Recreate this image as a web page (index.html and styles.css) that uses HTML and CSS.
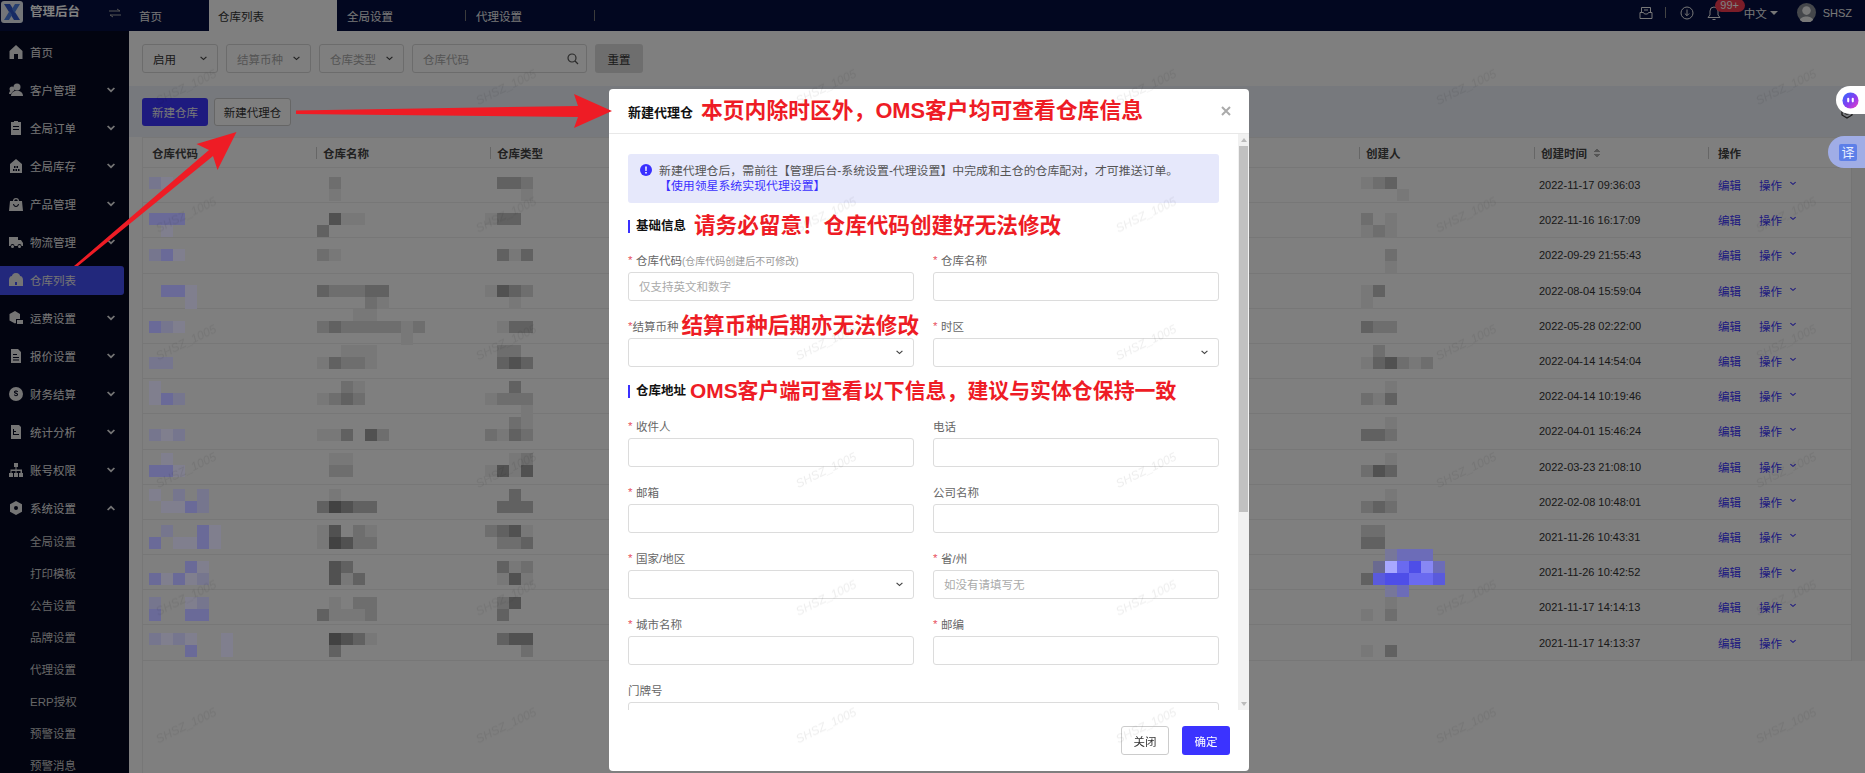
FILE: index.html
```html
<!DOCTYPE html>
<html lang="zh-CN">

<head>
    <meta charset="UTF-8">
    <title>仓库列表</title>
    <link rel="stylesheet" href="styles.css">
</head>

<body>

    <header class="topbar">
        <div class="brand">
            <svg class="logo" viewBox="0 0 22 22"><rect width="22" height="22" rx="3" fill="#e6ebf2"/><path d="M3 3h6l10 16h-6z" fill="#2f56c8"/><path d="M19 3h-5l-3 5 2.500 4zM3 19h5l3-5-2.500-4z" fill="#4d7fe0"/></svg>
            <span class="brand-name">管理后台</span>
            <svg class="toggle" viewBox="0 0 12 10" fill="none" stroke="currentColor"><path d="M0 3h11L8 1M12 7H1l3 2"/></svg>
        </div>
        <nav class="tabs">
            <a class="tab tab-first">首页</a>
            <a class="tab tab-active">仓库列表</a>
            <a class="tab">全局设置</a>
            <i class="tab-line"></i>
            <a class="tab">代理设置</a>
            <i class="tab-line"></i>
        </nav>
        <div class="top-tools">
            <svg class="tool-inbox" viewBox="0 0 14 14" fill="none" stroke="currentColor"><path d="M2.500 6V1.500h9V6M1 6.500h3.500l1 1.500h3l1-1.500H13v6H1zM5 4h4"/></svg>
            <i class="tool-line"></i>
            <svg class="tool-down" viewBox="0 0 14 14" fill="none" stroke="currentColor"><circle cx="7" cy="7" r="6"/><path d="M7 3.500v6M4.800 7.500 7 9.700l2.200-2.200"/></svg>
            <span class="bell">
                <svg viewBox="0 0 14 16" fill="none" stroke="currentColor"><path d="M7 2a4 4 0 0 0-4 4v4l-2 2.500h12L11 10V6a4 4 0 0 0-4-4zM5.500 14.500h3"/></svg>
                <b class="badge">99+</b>
            </span>
            <span class="lang">中文</span>
            <i class="caret"></i>
            <svg class="avatar" viewBox="0 0 20 20"><circle cx="10" cy="10" r="10" fill="#8a8f96"/><circle cx="10" cy="8" r="4.500" fill="#f0f0f0"/><path d="M3 18c1-5 13-5 14 0a10 10 0 0 1-14 0z" fill="#f0f0f0"/></svg>
            <span class="user">SHSZ</span>
        </div>
    </header>

    <div class="shell">
        <aside class="sidebar">
            <a class="nav-item">
                <svg class="nav-icon" viewBox="0 0 14 14"><path d="M7 0 .5 6v8h4.500V9h4v5h4.500V6z"/></svg>
                <span>首页</span>
            </a>
            <a class="nav-item">
                <svg class="nav-icon" viewBox="0 0 14 14"><circle cx="8" cy="4" r="3.500"/><path d="M2 13c0-7 12-7 12 0z"/><circle cx="3" cy="6" r="2.500"/><path d="M0 11c0-3 2-4 4-3l-2 3z"/></svg>
                <span>客户管理</span>
                <svg class="nav-arrow" viewBox="0 0 8 6"><path d="M0 1.500 1.200.5 4 3 6.800.5 8 1.500 4 5.500z"/></svg>
            </a>
            <a class="nav-item">
                <svg class="nav-icon" viewBox="0 0 14 14"><path d="M2 1h3V0h4v1h3v13H2zM4 5v1h6V5zm0 3v1h6V8z"/></svg>
                <span>全局订单</span>
                <svg class="nav-arrow" viewBox="0 0 8 6"><path d="M0 1.500 1.200.5 4 3 6.800.5 8 1.500 4 5.500z"/></svg>
            </a>
            <a class="nav-item">
                <svg class="nav-icon" viewBox="0 0 14 14"><path d="M7 0 1 5v9h12V5zM5 7h1.500v2H5zm2.500 0H9v2H7.500zM4 10h1.500v2H4zm2.500 0H8v2H6.500zm2.500 0h1.500v2H9z"/></svg>
                <span>全局库存</span>
                <svg class="nav-arrow" viewBox="0 0 8 6"><path d="M0 1.500 1.200.5 4 3 6.800.5 8 1.500 4 5.500z"/></svg>
            </a>
            <a class="nav-item">
                <svg class="nav-icon" viewBox="0 0 14 14"><path d="M4 4a3 3 0 0 1 6 0h3l1 10H0l1-10zm1.200 0h3.600a1.800 1.800 0 0 0-3.600 0zM4 7c.5 4 5.500 4 6 0H9c-.5 2.500-3.500 2.500-4 0z"/></svg>
                <span>产品管理</span>
                <svg class="nav-arrow" viewBox="0 0 8 6"><path d="M0 1.500 1.200.5 4 3 6.800.5 8 1.500 4 5.500z"/></svg>
            </a>
            <a class="nav-item">
                <svg class="nav-icon" viewBox="0 0 14 14"><path d="M0 2h9v3h3l2 3v3h-1.500a2 2 0 0 0-4 0h-3a2 2 0 0 0-4 0H0z"/><circle cx="3.500" cy="11.500" r="1.500"/><circle cx="10.500" cy="11.500" r="1.500"/></svg>
                <span>物流管理</span>
                <svg class="nav-arrow" viewBox="0 0 8 6"><path d="M0 1.500 1.200.5 4 3 6.800.5 8 1.500 4 5.500z"/></svg>
            </a>
            <a class="nav-item nav-active">
                <svg class="nav-icon" viewBox="0 0 14 14"><path d="M7 0C4 0 3 2 3 3 1 3 0 5 0 7v6h14V7c0-2-1-4-3-4 0-1-1-3-4-3zM6 9h2v3H6z"/></svg>
                <span>仓库列表</span>
            </a>
            <a class="nav-item">
                <svg class="nav-icon" viewBox="0 0 14 14"><path d="M6 0 .5 3v6.500L6 12.500l1-.6V8h4V3zM8 9h6v4H8z"/></svg>
                <span>运费设置</span>
                <svg class="nav-arrow" viewBox="0 0 8 6"><path d="M0 1.500 1.200.5 4 3 6.800.5 8 1.500 4 5.500z"/></svg>
            </a>
            <a class="nav-item">
                <svg class="nav-icon" viewBox="0 0 14 14"><path d="M2 0h7l3 3v11H2zm2 5v1h4V5zm0 3v1h6V8zm0 2.500v1h6v-1z"/></svg>
                <span>报价设置</span>
                <svg class="nav-arrow" viewBox="0 0 8 6"><path d="M0 1.500 1.200.5 4 3 6.800.5 8 1.500 4 5.500z"/></svg>
            </a>
            <a class="nav-item">
                <svg class="nav-icon" viewBox="0 0 14 14"><path fill-rule="evenodd" d="M7 0a7 7 0 1 0 0 14A7 7 0 0 0 7 0zM5 5c0-2 4-2 4 0H8c0-.8-2-.8-2 0s3 .5 3 2.500c0 2.200-4 2.200-4 0h1c0 1 2 1 2 0S5 7 5 5z"/></svg>
                <span>财务结算</span>
                <svg class="nav-arrow" viewBox="0 0 8 6"><path d="M0 1.500 1.200.5 4 3 6.800.5 8 1.500 4 5.500z"/></svg>
            </a>
            <a class="nav-item">
                <svg class="nav-icon" viewBox="0 0 14 14"><path fill-rule="evenodd" d="M2 0h8l2 2v12H2zm2 4v6h6V9H5V7h2V6H5V4z"/></svg>
                <span>统计分析</span>
                <svg class="nav-arrow" viewBox="0 0 8 6"><path d="M0 1.500 1.200.5 4 3 6.800.5 8 1.500 4 5.500z"/></svg>
            </a>
            <a class="nav-item">
                <svg class="nav-icon" viewBox="0 0 14 14"><path d="M5 0h4v4H7.500v2.500H13V10h1v4h-4v-4h1.500V8H7.500v2H9v4H5v-4h1.500V8h-4v2H4v4H0v-4h1.500V6.500h5V4H5z"/></svg>
                <span>账号权限</span>
                <svg class="nav-arrow" viewBox="0 0 8 6"><path d="M0 1.500 1.200.5 4 3 6.800.5 8 1.500 4 5.500z"/></svg>
            </a>
            <a class="nav-item">
                <svg class="nav-icon" viewBox="0 0 14 14"><path fill-rule="evenodd" d="M7 0l6 3.300v7.400L7 14l-6-3.300V3.300zm0 5a2 2 0 1 0 0 4 2 2 0 0 0 0-4z"/></svg>
                <span>系统设置</span>
                <svg class="nav-arrow" viewBox="0 0 8 6"><path d="M0 4.500 1.200 5.500 4 3l2.800 2.500L8 4.500 4 .5z"/></svg>
            </a>
            <div class="subnav">
                <a class="sub-item">全局设置</a>
                <a class="sub-item">打印模板</a>
                <a class="sub-item">公告设置</a>
                <a class="sub-item">品牌设置</a>
                <a class="sub-item">代理设置</a>
                <a class="sub-item">ERP授权</a>
                <a class="sub-item">预警设置</a>
                <a class="sub-item">预警消息</a>
            </div>
        </aside>

        <main class="main">
            <div class="filters">
                <div class="select filter-status"><span class="value">启用</span><svg class="chev" viewBox="0 0 8 6"><path d="M0 1.500 1 .5 4 3.300 7 .5l1 1-4 3.500z"/></svg></div>
                <div class="select filter-currency"><span class="hint">结算币种</span><svg class="chev" viewBox="0 0 8 6"><path d="M0 1.500 1 .5 4 3.300 7 .5l1 1-4 3.500z"/></svg></div>
                <div class="select filter-type"><span class="hint">仓库类型</span><svg class="chev" viewBox="0 0 8 6"><path d="M0 1.500 1 .5 4 3.300 7 .5l1 1-4 3.500z"/></svg></div>
                <div class="select filter-code"><span class="hint">仓库代码</span><svg class="search" viewBox="0 0 12 12" fill="none" stroke="currentColor" stroke-width="1.200"><circle cx="5" cy="5" r="4"/><path d="M8 8l3 3"/></svg></div>
                <button class="btn-reset">重置</button>
            </div>

            <div class="toolbar">
                <button class="btn btn-primary">新建仓库</button>
                <button class="btn btn-plain">新建代理仓</button>
                <svg class="gear" viewBox="0 0 14 14" fill="none" stroke="currentColor" stroke-width="1.300"><path d="M7 1l5 3v6l-5 3-5-3V4z"/><circle cx="7" cy="7" r="2"/></svg>
            </div>

            <div class="table">
                <div class="thead">
                    <div class="th th-first"><span>仓库代码</span></div>
                    <div class="th"><span>仓库名称</span></div>
                    <div class="th"><span>仓库类型</span></div>
                    <div class="th"><span>创建人</span></div>
                    <div class="th"><span>创建时间<i class="sort"></i></span></div>
                    <div class="th th-ops"><span>操作</span></div>
                </div>
                <div class="tbody-wrap">
                    <div class="tbody">
                        <div class="tr"><div class="td-date">2022-11-17 09:36:03</div><div class="td-ops"><a>编辑</a><a>操作</a><svg class="op-chev" viewBox="0 0 8 6"><path d="M0 1.500 1 .5 4 3.300 7 .5l1 1-4 3.500z"/></svg></div></div>
                        <div class="tr"><div class="td-date">2022-11-16 16:17:09</div><div class="td-ops"><a>编辑</a><a>操作</a><svg class="op-chev" viewBox="0 0 8 6"><path d="M0 1.500 1 .5 4 3.300 7 .5l1 1-4 3.500z"/></svg></div></div>
                        <div class="tr"><div class="td-date">2022-09-29 21:55:43</div><div class="td-ops"><a>编辑</a><a>操作</a><svg class="op-chev" viewBox="0 0 8 6"><path d="M0 1.500 1 .5 4 3.300 7 .5l1 1-4 3.500z"/></svg></div></div>
                        <div class="tr"><div class="td-date">2022-08-04 15:59:04</div><div class="td-ops"><a>编辑</a><a>操作</a><svg class="op-chev" viewBox="0 0 8 6"><path d="M0 1.500 1 .5 4 3.300 7 .5l1 1-4 3.500z"/></svg></div></div>
                        <div class="tr"><div class="td-date">2022-05-28 02:22:00</div><div class="td-ops"><a>编辑</a><a>操作</a><svg class="op-chev" viewBox="0 0 8 6"><path d="M0 1.500 1 .5 4 3.300 7 .5l1 1-4 3.500z"/></svg></div></div>
                        <div class="tr"><div class="td-date">2022-04-14 14:54:04</div><div class="td-ops"><a>编辑</a><a>操作</a><svg class="op-chev" viewBox="0 0 8 6"><path d="M0 1.500 1 .5 4 3.300 7 .5l1 1-4 3.500z"/></svg></div></div>
                        <div class="tr"><div class="td-date">2022-04-14 10:19:46</div><div class="td-ops"><a>编辑</a><a>操作</a><svg class="op-chev" viewBox="0 0 8 6"><path d="M0 1.500 1 .5 4 3.300 7 .5l1 1-4 3.500z"/></svg></div></div>
                        <div class="tr"><div class="td-date">2022-04-01 15:46:24</div><div class="td-ops"><a>编辑</a><a>操作</a><svg class="op-chev" viewBox="0 0 8 6"><path d="M0 1.500 1 .5 4 3.300 7 .5l1 1-4 3.500z"/></svg></div></div>
                        <div class="tr"><div class="td-date">2022-03-23 21:08:10</div><div class="td-ops"><a>编辑</a><a>操作</a><svg class="op-chev" viewBox="0 0 8 6"><path d="M0 1.500 1 .5 4 3.300 7 .5l1 1-4 3.500z"/></svg></div></div>
                        <div class="tr"><div class="td-date">2022-02-08 10:48:01</div><div class="td-ops"><a>编辑</a><a>操作</a><svg class="op-chev" viewBox="0 0 8 6"><path d="M0 1.500 1 .5 4 3.300 7 .5l1 1-4 3.500z"/></svg></div></div>
                        <div class="tr"><div class="td-date">2021-11-26 10:43:31</div><div class="td-ops"><a>编辑</a><a>操作</a><svg class="op-chev" viewBox="0 0 8 6"><path d="M0 1.500 1 .5 4 3.300 7 .5l1 1-4 3.500z"/></svg></div></div>
                        <div class="tr"><div class="td-date">2021-11-26 10:42:52</div><div class="td-ops"><a>编辑</a><a>操作</a><svg class="op-chev" viewBox="0 0 8 6"><path d="M0 1.500 1 .5 4 3.300 7 .5l1 1-4 3.500z"/></svg></div></div>
                        <div class="tr"><div class="td-date">2021-11-17 14:14:13</div><div class="td-ops"><a>编辑</a><a>操作</a><svg class="op-chev" viewBox="0 0 8 6"><path d="M0 1.500 1 .5 4 3.300 7 .5l1 1-4 3.500z"/></svg></div></div>
                        <div class="tr"><div class="td-date">2021-11-17 14:13:37</div><div class="td-ops"><a>编辑</a><a>操作</a><svg class="op-chev" viewBox="0 0 8 6"><path d="M0 1.500 1 .5 4 3.300 7 .5l1 1-4 3.500z"/></svg></div></div>
                    </div>
                    <div class="gutter"></div>
                </div>
            </div>
        </main>
    </div>

    <!-- dim layer, the pixelated table data sits on top of it -->
    <div class="mask">
        <svg class="mosaic" viewBox="0 0 1865 773">
            <g transform="translate(149 177) scale(12)" shape-rendering="crispEdges">
                <path class="g78" d="M101 0h1v1h-1zM15 1h1v1h-1zM31 1h1v1h-1zM104 1h1v1h-1zM16 3h2v1h-2zM28 3h1v1h-1zM103 3h1v1h-1zM101 4h1v1h-1zM103 4h1v1h-1zM15 6h1v1h-1zM30 6h1v1h-1zM103 7h1v1h-1zM28 9h1v1h-1zM101 9h1v1h-1zM19 10h1v1h-1zM30 10h1v1h-1zM101 10h1v1h-1zM17 11h2v1h-2zM21 12h1v1h-1zM29 12h1v1h-1zM21 13h1v1h-1zM16 14h3v1h-3zM14 15h1v1h-1zM18 15h1v1h-1zM101 15h1v1h-1zM105 15h1v1h-1zM17 17h1v1h-1zM103 17h1v1h-1zM14 18h1v1h-1zM28 18h1v1h-1zM102 18h1v1h-1zM31 19h1v2h-1zM103 20h1v1h-1zM14 21h2v1h-2zM29 21h1v1h-1zM15 23h2v1h-2zM30 23h1v1h-1zM103 23h1v1h-1zM28 24h1v1h-1zM30 24h1v1h-1zM15 26h1v1h-1zM103 26h1v1h-1zM14 29h1v2h-1zM18 29h1v1h-1zM31 29h1v1h-1zM30 32h1v1h-1zM16 33h1v1h-1zM29 33h1v1h-1zM31 33h1v1h-1zM15 35h1v2h-1zM103 35h1v1h-1zM16 36h2v1h-2zM101 36h1v1h-1zM18 38h1v1h-1zM101 39h1v1h-1z"/>
                <path class="g70" d="M15 0h1v1h-1zM31 0h1v1h-1zM102 0h1v1h-1zM101 3h1v1h-1zM102 4h1v1h-1zM14 6h1v1h-1zM103 6h1v1h-1zM15 9h3v1h-3zM31 9h1v1h-1zM18 10h1v1h-1zM14 12h1v1h-1zM16 12h5v1h-5zM22 12h1v1h-1zM102 12h2v1h-2zM29 14h2v1h-2zM102 14h1v1h-1zM16 15h2v1h-2zM104 15h1v1h-1zM106 15h1v1h-1zM16 17h1v1h-1zM15 18h1v1h-1zM17 18h1v1h-1zM29 18h3v1h-3zM101 18h1v1h-1zM30 20h1v1h-1zM19 21h1v1h-1zM28 21h1v1h-1zM31 21h1v1h-1zM103 21h1v1h-1zM31 23h1v1h-1zM15 24h2v1h-2zM101 24h1v1h-1zM101 27h1v1h-1zM103 27h1v1h-1zM17 29h1v1h-1zM28 29h1v1h-1zM101 29h2v1h-2zM17 30h2v1h-2zM29 30h2v1h-2zM31 32h1v1h-1zM17 35h2v1h-2zM29 35h1v1h-1zM18 36h1v1h-1zM103 36h1v1h-1zM31 39h1v1h-1z"/>
                <path class="g60" d="M29 0h2v1h-2zM103 0h1v1h-1zM14 4h1v1h-1zM29 3h2v1h-2zM29 6h1v1h-1zM31 6h1v1h-1zM14 9h1v1h-1zM18 9h2v1h-2zM30 9h1v1h-1zM102 9h1v1h-1zM15 12h1v1h-1zM30 12h2v1h-2zM101 12h1v1h-1zM15 15h1v1h-1zM29 15h1v1h-1zM31 15h1v1h-1zM102 15h1v1h-1zM30 17h1v1h-1zM16 18h1v1h-1zM103 18h1v1h-1zM16 21h1v1h-1zM30 21h1v1h-1zM101 21h2v1h-2zM103 24h1v1h-1zM30 26h1v1h-1zM14 27h1v1h-1zM17 27h2v1h-2zM29 27h3v1h-3zM102 27h1v1h-1zM29 29h1v1h-1zM31 30h1v1h-1zM101 30h2v1h-2zM16 32h1v1h-1zM29 32h1v1h-1zM17 33h1v1h-1zM14 36h1v1h-1zM29 36h1v1h-1zM17 38h1v1h-1zM29 38h1v1h-1zM15 39h1v1h-1zM103 39h1v1h-1z"/>
                <path class="g50" d="M15 3h1v1h-1zM29 9h1v1h-1zM30 15h1v1h-1zM103 15h1v1h-1zM18 21h1v1h-1zM29 24h1v1h-1zM31 24h1v1h-1zM102 24h1v1h-1zM16 27h1v1h-1zM15 29h1v1h-1zM30 29h1v1h-1zM16 30h1v1h-1zM15 32h1v2h-1zM30 33h1v1h-1zM30 35h1v1h-1zM16 38h1v1h-1zM30 38h2v1h-2z"/>
                <path class="g40" d="M15 27h1v1h-1zM15 30h1v1h-1zM15 38h1v1h-1z"/>
                <path class="p1" d="M1 0h1v1h-1zM1 4h1v1h-1zM2 6h1v1h-1zM3 9h1v2h-1zM2 12h1v1h-1zM0 17h1v2h-1zM1 21h1v1h-1zM1 23h1v1h-1zM2 24h1v1h-1zM0 26h1v1h-1zM1 27h2v1h-2zM5 29h1v2h-1zM2 30h2v1h-2zM4 32h1v1h-1zM1 33h1v1h-1zM3 33h1v1h-1zM3 35h1v1h-1zM1 38h1v1h-1zM3 38h1v1h-1zM6 38h1v2h-1z"/>
                <path class="p2" d="M0 0h1v1h-1zM0 6h1v1h-1zM1 12h1v1h-1zM0 15h2v1h-2zM2 18h1v1h-1zM0 21h1v1h-1zM2 21h1v1h-1zM2 26h1v1h-1zM4 26h1v2h-1zM1 29h1v1h-1zM4 33h1v1h-1zM0 35h1v1h-1zM4 35h1v1h-1zM0 38h1v1h-1zM2 38h1v1h-1z"/>
                <path class="p3" d="M0 3h3v1h-3zM1 6h1v1h-1zM1 9h2v1h-2zM0 12h1v1h-1zM1 18h1v1h-1zM0 24h2v1h-2zM3 27h1v1h-1zM4 29h1v2h-1zM0 30h1v1h-1zM3 32h1v1h-1zM0 33h1v1h-1zM2 33h1v1h-1zM0 36h1v1h-1zM3 36h2v1h-2zM3 39h1v1h-1z"/>
                <path fill="#77779a" d="M103 31h1v1h-1zM103 34h1v1h-1z"/>
                <path fill="#6c6cb8" d="M104 31h3v1h-3zM104 34h1v1h-1zM107 33h1v-1h-1z"/>
                <path fill="#6a6a90" d="M102 32h1v1h-1z"/>
                <path fill="#a8a8ff" d="M103 32h1v1h-1z"/>
                <path fill="#6a6af0" d="M104 32h1v1h-1zM105 33h2v1h-2z"/>
                <path fill="#4e4ee8" d="M105 32h1v1h-1zM103 33h2v1h-2z"/>
                <path fill="#8888f4" d="M106 32h1v1h-1z"/>
                <path fill="#5a5adc" d="M102 33h1v1h-1zM107 33h1v1h-1z"/>
                <path class="g60" d="M101 33h1v1h-1z"/>
            </g>
        </svg>
    </div>

    <section class="modal">
        <div class="modal-head">
            <h2 class="modal-title">新建代理仓</h2>
            <span class="note note-head">本页内除时区外，OMS客户均可查看仓库信息</span>
            <svg class="modal-close" viewBox="0 0 10 10" stroke="currentColor" stroke-width="2"><path d="M1 1l8 8M9 1 1 9"/></svg>
        </div>

        <div class="modal-body">
            <div class="form-scroll">
                <div class="alert">
                    <svg class="alert-icon" viewBox="0 0 12 12"><circle cx="6" cy="6" r="6" fill="#3a30ff"/><path d="M5.200 2.500h1.600l-.2 4.500H5.400zM5.200 8h1.600v1.500H5.200z" fill="#fff"/></svg>
                    <p>新建代理仓后，需前往【管理后台-系统设置-代理设置】中完成和主仓的仓库配对，才可推送订单。 <a>【使用领星系统实现代理设置】</a></p>
                </div>

                <div class="section-title"><h3>基础信息</h3><span class="note note-base">请务必留意！仓库代码创建好无法修改</span></div>
                <div class="form-grid">
                    <div class="field">
                        <label><em>*</em>仓库代码<small>(仓库代码创建后不可修改)</small></label>
                        <input type="text" placeholder="仅支持英文和数字">
                    </div>
                    <div class="field">
                        <label><em>*</em>仓库名称</label>
                        <input type="text">
                    </div>
                    <div class="field">
                        <label><em>*</em>结算币种<span class="note note-currency">结算币种后期亦无法修改</span></label>
                        <div class="select"><svg class="chev" viewBox="0 0 8 6"><path d="M0 1.500 1 .5 4 3.300 7 .5l1 1-4 3.500z"/></svg></div>
                    </div>
                    <div class="field">
                        <label><em>*</em>时区</label>
                        <div class="select"><svg class="chev" viewBox="0 0 8 6"><path d="M0 1.500 1 .5 4 3.300 7 .5l1 1-4 3.500z"/></svg></div>
                    </div>
                </div>

                <div class="section-title section-address"><h3>仓库地址</h3><span class="note note-address">OMS客户端可查看以下信息，建议与实体仓保持一致</span></div>
                <div class="form-grid form-address">
                    <div class="field">
                        <label><em>*</em>收件人</label>
                        <input type="text">
                    </div>
                    <div class="field">
                        <label>电话</label>
                        <input type="text">
                    </div>
                    <div class="field">
                        <label><em>*</em>邮箱</label>
                        <input type="text">
                    </div>
                    <div class="field">
                        <label>公司名称</label>
                        <input type="text">
                    </div>
                    <div class="field">
                        <label><em>*</em>国家/地区</label>
                        <div class="select"><svg class="chev" viewBox="0 0 8 6"><path d="M0 1.500 1 .5 4 3.300 7 .5l1 1-4 3.500z"/></svg></div>
                    </div>
                    <div class="field">
                        <label><em>*</em>省/州</label>
                        <input type="text" placeholder="如没有请填写无">
                    </div>
                    <div class="field">
                        <label><em>*</em>城市名称</label>
                        <input type="text">
                    </div>
                    <div class="field">
                        <label><em>*</em>邮编</label>
                        <input type="text">
                    </div>
                    <div class="field field-wide">
                        <label>门牌号</label>
                        <input type="text">
                    </div>
                </div>
            </div>
            <div class="scrollbar">
                <i class="scroll-up"></i>
                <div class="scroll-track"><div class="scroll-thumb"></div></div>
                <i class="scroll-down"></i>
            </div>
        </div>

        <div class="modal-foot">
            <button class="foot-btn">关闭</button>
            <button class="foot-btn foot-ok">确定</button>
        </div>
    </section>

    <!-- browser extension widgets on the right edge -->
    <div class="float-ai"><svg viewBox="0 0 18 18"><defs><linearGradient id="ai" x1="0" y1="0" x2="1" y2="1"><stop offset="0" stop-color="#2a6cff"/><stop offset=".55" stop-color="#8a3cf0"/><stop offset="1" stop-color="#f040c0"/></linearGradient></defs><circle cx="9" cy="9" r="8.500" fill="url(#ai)"/><rect x="5.500" y="6" width="2.200" height="5" rx="1.100" fill="#fff"/><rect x="10.300" y="6" width="2.200" height="5" rx="1.100" fill="#fff"/></svg></div>
    <div class="float-translate"><span>译</span></div>

    <svg class="watermark" width="1865" height="773">
        <defs>
            <pattern id="wm" patternUnits="userSpaceOnUse" width="320" height="127.700">
                <text x="186" y="91" text-anchor="middle" transform="rotate(-26 186 87)">SHSZ_1005</text>
            </pattern>
        </defs>
        <rect width="1865" height="773" fill="url(#wm)"/>
    </svg>

    <svg class="arrows" width="1865" height="773">
        <path d="M296 110.500 578 106l-4-12 38 17-38 17 4-11-282-3z"/>
        <path d="M236.500 132 196.500 144 209 150 74 266h4L213 156l4.500 14z"/>
    </svg>

</body>

</html>
```

FILE: styles.css
```css
* {
    box-sizing: border-box;
}

body {
    margin: 0;
    width: 1865px;
    height: 773px;
    overflow: hidden;
    background: #fff;
    font-family: "Liberation Sans", "Noto Sans CJK SC", sans-serif;
    font-size: 11.5px;
    color: #333;
}

h2, h3, p {
    margin: 0;
}

button, input {
    font-family: inherit;
}

/* top bar */

.topbar {
    display: flex;
    height: 31px;
    background: #040e40;
    color: #f0f0f0;
}

.brand {
    display: flex;
    align-items: flex-start;
    width: 129px;
    padding: 1px 0 0 1px;
}

.logo {
    width: 22px;
    height: 22px;
}

.brand-name {
    margin-left: 7px;
    font-size: 12.500px;
    line-height: 22px;
    font-weight: bold;
    color: #fff;
}

.toggle {
    width: 12px;
    height: 10px;
    margin: 7px 0 0 29px;
    color: #aaa;
}

.tabs {
    display: flex;
    align-items: center;
}

.tab {
    display: flex;
    align-items: center;
    width: 128px;
    height: 31px;
    padding-left: 10px;
    color: #eee;
}

.tab-first {
    width: 80px;
}

.tab-active {
    padding-left: 9px;
    background: #fff;
    color: #333;
}

.tab-line {
    width: 1px;
    height: 11px;
    background: #777;
}

.top-tools {
    display: flex;
    align-items: center;
    margin-left: auto;
    padding: 0 13px 6px 0;
}

.tool-inbox {
    width: 14px;
    height: 14px;
}

.tool-line {
    width: 1px;
    height: 11px;
    margin: 0 14px 0 12px;
    background: #888;
}

.tool-down {
    width: 14px;
    height: 14px;
}

.bell {
    position: relative;
    display: flex;
    margin-left: 13px;
}

.bell svg {
    width: 14px;
    height: 16px;
}

.badge {
    position: absolute;
    top: -6px;
    left: 8px;
    width: 30px;
    height: 13px;
    border-radius: 7px;
    background: #f53a50;
    font-size: 11px;
    font-weight: normal;
    line-height: 13px;
    text-align: center;
    color: #fff;
}

.lang {
    margin-left: 23px;
}

.caret {
    margin: 0 0 0 3px;
    border: 4px solid transparent;
    border-top: 4px solid #eee;
    border-bottom: 0;
}

.avatar {
    width: 19px;
    height: 19px;
    margin-left: 19px;
}

.user {
    margin-left: 7px;
    font-size: 11px;
}

/* shell */

.shell {
    display: flex;
    height: 742px;
}

.sidebar {
    width: 129px;
    flex-shrink: 0;
    padding-top: 2px;
    overflow: hidden;
    background: #040820;
    color: #eaeaea;
}

.nav-item {
    display: flex;
    align-items: center;
    height: 38px;
    padding: 0 14px 0 9px;
}

.nav-icon {
    width: 14px;
    height: 14px;
    margin-right: 7px;
    fill: currentColor;
}

.nav-arrow {
    width: 8px;
    height: 6px;
    margin-left: auto;
    fill: currentColor;
}

.nav-active {
    width: 124px;
    height: 29px;
    margin: 4.500px 0;
    border-radius: 0 3px 3px 0;
    background: #4450f8;
}

.subnav {
    margin-top: -2px;
}

.sub-item {
    display: flex;
    align-items: center;
    height: 32px;
    padding-left: 30px;
    color: #ccc;
}

.main {
    display: flex;
    flex: 1;
    flex-direction: column;
    min-width: 0;
    background: #fff;
}

/* filters */

.filters {
    display: flex;
    gap: 8px;
    height: 55px;
    padding: 13px 13px 13px 13px;
}

.select {
    display: flex;
    align-items: center;
    justify-content: space-between;
    height: 29px;
    padding: 0 10px;
    border: 1px solid #d8d8d8;
    border-radius: 3px;
    background: #fff;
}

.filter-status {
    width: 76px;
}

.filter-currency, .filter-type {
    width: 85px;
}

.filter-code {
    width: 175px;
}

.value {
    color: #333;
}

.hint {
    color: #aaa;
}

.chev {
    width: 7px;
    height: 5px;
    margin-left: auto;
    fill: #444;
}

.search {
    width: 12px;
    height: 12px;
    margin-right: -3px;
    color: #555;
}

.btn-reset {
    width: 48px;
    height: 29px;
    border: none;
    border-radius: 3px;
    background: #ddd;
    font-size: 11.500px;
    color: #333;
}

/* toolbar */

.toolbar {
    display: flex;
    align-items: center;
    gap: 6px;
    height: 51px;
    padding: 0 13px;
    background: #eef2fa;
}

.btn {
    height: 28px;
    border-radius: 3px;
    font-size: 11.500px;
}

.btn-primary {
    width: 66px;
    border: none;
    background: #3c34ff;
    color: #eee;
}

.btn-plain {
    width: 77px;
    border: 1px solid #ccc;
    background: #fff;
    color: #333;
}

.gear {
    width: 14px;
    height: 14px;
    margin-left: auto;
    margin-right: -2px;
    color: #333;
}

/* table */

.table {
    flex: 1;
    margin-left: 13px;
    border-left: 1px solid #eee;
}

.thead {
    display: grid;
    grid-template-columns: 173px 174px 869px 175px 174px 1fr;
    height: 31px;
    border-top: 1px solid #eee;
    border-bottom: 1px solid #eee;
    background: #fff;
}

.th {
    display: flex;
    align-items: center;
    font-weight: bold;
    color: #444;
}

.th span {
    display: flex;
    align-items: center;
    height: 12px;
    padding-left: 6px;
    border-left: 1px solid #ccc;
}

.th-first span {
    padding-left: 9px;
    border-left: none;
}

.th-ops span {
    padding-left: 9px;
}

.sort {
    width: 6px;
    height: 10px;
    margin-left: 7px;
    background:
        linear-gradient(135deg, transparent 50%, #aaa 50%) 0 0 / 3px 4px no-repeat,
        linear-gradient(225deg, transparent 50%, #aaa 50%) 3px 0 / 3px 4px no-repeat,
        linear-gradient(45deg, transparent 50%, #aaa 50%) 0 6px / 3px 4px no-repeat,
        linear-gradient(315deg, transparent 50%, #aaa 50%) 3px 6px / 3px 4px no-repeat;
}

.tbody-wrap {
    display: flex;
}

.tbody {
    width: 1708px;
}

.tr {
    display: flex;
    align-items: center;
    height: 35.200px;
    padding-left: 1396px;
    border-bottom: 1px solid #eee;
    background: #fff;
}

.td-date {
    width: 179px;
    font-size: 11px;
    color: #333;
}

.td-ops {
    display: flex;
    align-items: center;
    color: #3c34ff;
}

.td-ops a {
    margin-right: 18px;
}

.td-ops a + a {
    margin-right: 8px;
}

.op-chev {
    width: 6px;
    height: 5px;
    margin-top: -3px;
    fill: #3c34ff;
}

.gutter {
    flex: 1;
    border-left: 1px solid #e8e8e8;
    background: #f2f2f2;
}

/* dim layer with the pixelated cells */

.mask {
    position: fixed;
    inset: 0;
    background: rgba(0, 0, 0, .5);
}

.mosaic {
    display: block;
    width: 1865px;
    height: 773px;
}

.g78 { fill: #787878; }
.g70 { fill: #6e6e6e; }
.g60 { fill: #616161; }
.g50 { fill: #515151; }
.g40 { fill: #424242; }
.p1 { fill: #807f8e; }
.p2 { fill: #76768e; }
.p3 { fill: #6a6a98; }

/* modal */

.modal {
    position: fixed;
    top: 89px;
    left: 609px;
    display: flex;
    flex-direction: column;
    width: 640px;
    height: 682px;
    border-radius: 4px;
    background: #fff;
}

.modal-head {
    display: flex;
    align-items: center;
    height: 45px;
    padding: 0 18px 0 19px;
    border-bottom: 1px solid #e8e8e8;
}

.modal-title {
    font-size: 13px;
    font-weight: bold;
    color: #111;
}

.modal-close {
    width: 10px;
    height: 10px;
    margin-left: auto;
    color: #aaa;
}

.note {
    font-weight: bold;
    white-space: nowrap;
    color: #ee1c25;
}

.note-head {
    margin-left: 8px;
    font-size: 21.800px;
    line-height: 30px;
}

.note-base {
    margin-left: 8px;
    font-size: 21.600px;
    line-height: 20px;
}

.note-currency {
    margin-left: 3px;
    font-size: 21.600px;
    line-height: 20px;
}

.note-address {
    margin-left: 4px;
    font-size: 20.900px;
    line-height: 20px;
}

.modal-body {
    display: flex;
    flex: 1;
    min-height: 0;
}

.form-scroll {
    flex: 1;
    padding: 20px 19px 0 19px;
    overflow: hidden;
}

.alert {
    display: flex;
    height: 49px;
    padding: 10px 18px 0 12px;
    border-radius: 3px;
    background: #e6e8fb;
    font-size: 11.900px;
    line-height: 15px;
    color: #555;
}

.alert-icon {
    flex-shrink: 0;
    width: 12px;
    height: 12px;
    margin: 0 7px 0 0;
}

.alert a {
    color: #3a30ff;
}

.section-title {
    display: flex;
    align-items: center;
    height: 20px;
    margin-top: 13px;
}

.section-title h3 {
    padding-left: 6px;
    border-left: 2px solid #3a30ff;
    font-size: 12.500px;
    line-height: 13px;
    font-weight: bold;
    color: #111;
}

.section-address {
    margin-top: 14px;
}

.form-grid {
    display: grid;
    grid-template-columns: 286px 286px;
    gap: 13px 19px;
    margin-top: 12px;
}

.form-address {
    margin-top: 13px;
}

.field-wide {
    grid-column: 1 / span 2;
}

.field label {
    display: flex;
    align-items: center;
    height: 24px;
    font-size: 11.500px;
    color: #666;
    white-space: nowrap;
}

.field em {
    width: 8px;
    font-style: normal;
    color: #e8535f;
}

.field small {
    font-size: 10px;
    color: #999;
}

.field input, .field .select {
    display: flex;
    width: 100%;
    height: 29px;
    padding: 0 10px;
    border: 1px solid #dcdcdc;
    border-radius: 3px;
    outline: none;
    font-size: 11.500px;
}

.field input::placeholder {
    color: #aaa;
}

.scrollbar {
    display: flex;
    flex-direction: column;
    width: 11px;
    background: #f1f1f1;
}

.scroll-up, .scroll-down {
    height: 12px;
    border: 3px solid transparent;
}

.scroll-up {
    margin: 4px auto 0;
    width: 0;
    height: 0;
    border-bottom: 4px solid #bbb;
    border-top: 0;
}

.scroll-down {
    margin: 0 auto 4px;
    width: 0;
    height: 0;
    border-top: 4px solid #bbb;
    border-bottom: 0;
}

.scroll-track {
    flex: 1;
    padding: 4px 1px 0;
}

.scroll-thumb {
    height: 366px;
    background: #c1c1c1;
}

.modal-foot {
    display: flex;
    justify-content: flex-end;
    gap: 13px;
    height: 61px;
    padding: 16px 19px 0 0;
}

.foot-btn {
    width: 48px;
    height: 29px;
    border: 1px solid #ccc;
    border-radius: 3px;
    background: #fff;
    font-size: 11.500px;
    color: #333;
}

.foot-ok {
    border: none;
    background: #3b33ff;
    color: #fff;
}

/* floating widgets */

.float-ai {
    position: fixed;
    top: 86px;
    right: 0;
    display: flex;
    align-items: center;
    width: 29px;
    height: 28px;
    padding-left: 6px;
    border-radius: 14px 0 0 14px;
    background: #fff;
}

.float-ai svg {
    width: 17px;
    height: 17px;
}

.float-translate {
    position: fixed;
    top: 136px;
    right: 0;
    display: flex;
    align-items: center;
    width: 37px;
    height: 32px;
    padding-left: 11px;
    border-radius: 16px 0 0 16px;
    background: #a0ade6;
}

.float-translate span {
    width: 18px;
    height: 17px;
    border-radius: 2px;
    background: #5d7fe8;
    font-size: 13px;
    line-height: 17px;
    text-align: center;
    color: #e8eeff;
}

/* overlays */

.watermark {
    position: fixed;
    top: 0;
    left: 0;
    pointer-events: none;
}

.watermark text {
    font-family: "Liberation Sans", sans-serif;
    font-size: 12px;
    font-style: italic;
    fill: rgba(0, 0, 0, .07);
}

.arrows {
    position: fixed;
    top: 0;
    left: 0;
    pointer-events: none;
    fill: #ee1c25;
}
```
